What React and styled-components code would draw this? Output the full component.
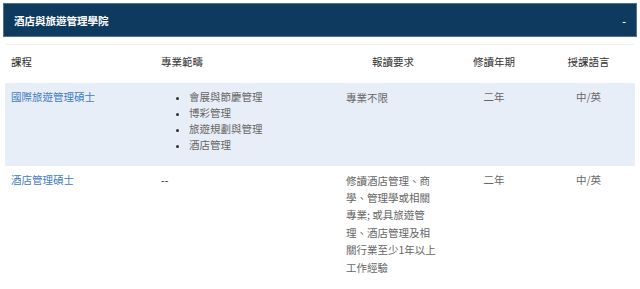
import React from "react";
import styled, { createGlobalStyle } from "styled-components";

const GlobalStyle = createGlobalStyle`
  html, body {
    margin: 0;
    padding: 0;
    background: #fff;
    font-family: "Noto Sans CJK TC", "Noto Sans", sans-serif;
  }
`;

const Page = styled.div`
  padding: 3px 3px 0 3px;
`;

const Panel = styled.div`
  display: flex;
  flex-direction: column;
`;

const PanelHeader = styled.div`
  height: 32px;
  background: #0e3a5f;
  border: 1px solid #4d7396;
  display: flex;
  align-items: center;
  justify-content: space-between;
  padding: 0 10px 0 10px;
`;

const PanelTitle = styled.h3`
  margin: 0;
  color: #fff;
  font-size: 10.5px;
  font-weight: 700;
`;

const Toggle = styled.span`
  color: #fff;
  font-size: 10px;
  font-weight: 700;
`;

const Table = styled.table`
  margin: 7px 2px 0 2px;
  width: calc(100% - 4px);
  border-collapse: collapse;
  table-layout: fixed;
  border-top: 1px solid #eef1f5;
  font-size: 10.5px;
  color: #666;
`;

const HeadCell = styled.th`
  font-weight: 400;
  color: #333;
  height: 38px;
  box-sizing: border-box;
  padding: 9px 6px 0 6px;
  vertical-align: top;
  text-align: ${(p) => p.align || "left"};
  width: ${(p) => (p.w ? `${p.w}px` : "auto")};
`;

const Row = styled.tr`
  background: ${(p) => (p.shaded ? "#e8eef8" : "#fff")};
  vertical-align: top;
`;

const Cell = styled.td`
  padding: 6px 6px 6px 6px;
  line-height: 16px;
  text-align: ${(p) => p.align || "left"};
`;

const WrapCell = styled(Cell)`
  line-height: 17.4px;
  padding-right: 8px;
`;

const CourseLink = styled.a`
  color: #3f7cbf;
  text-decoration: none;
`;

const Dash = styled.span`
  color: #222;
`;

const FieldList = styled.ul`
  margin: 0 0 7px 0;
  padding-left: 28px;
  li::marker {
    font-size: 9px;
    color: #333;
  }
`;

const programs = [
  {
    name: "國際旅遊管理碩士",
    fields: ["會展與節慶管理", "博彩管理", "旅遊規劃與管理", "酒店管理"],
    req: "專業不限",
    years: "二年",
    lang: "中/英",
  },
  {
    name: "酒店管理碩士",
    fields: null,
    req: "修讀酒店管理、商學、管理學或相關專業; 或具旅遊管理、酒店管理及相關行業至少1年以上工作經驗",
    years: "二年",
    lang: "中/英",
  },
];

export default function App() {
  return (
    <Page>
      <GlobalStyle />
      <Panel>
        <PanelHeader>
          <PanelTitle>酒店與旅遊管理學院</PanelTitle>
          <Toggle>-</Toggle>
        </PanelHeader>
        <Table>
          <thead>
            <tr>
              <HeadCell w={150}>課程</HeadCell>
              <HeadCell w={185}>專業範疇</HeadCell>
              <HeadCell w={106} align="center">報讀要求</HeadCell>
              <HeadCell w={96} align="center">修讀年期</HeadCell>
              <HeadCell align="center">授課語言</HeadCell>
            </tr>
          </thead>
          <tbody>
            {programs.map((p, i) => (
              <Row key={p.name} shaded={i % 2 === 0}>
                <Cell>
                  <CourseLink href="#">{p.name}</CourseLink>
                </Cell>
                <Cell>
                  {p.fields ? (
                    <FieldList>
                      {p.fields.map((f) => (
                        <li key={f}>{f}</li>
                      ))}
                    </FieldList>
                  ) : (
                    <Dash>--</Dash>
                  )}
                </Cell>
                <WrapCell>{p.req}</WrapCell>
                <Cell align="center">{p.years}</Cell>
                <Cell align="center">{p.lang}</Cell>
              </Row>
            ))}
          </tbody>
        </Table>
      </Panel>
    </Page>
  );
}
